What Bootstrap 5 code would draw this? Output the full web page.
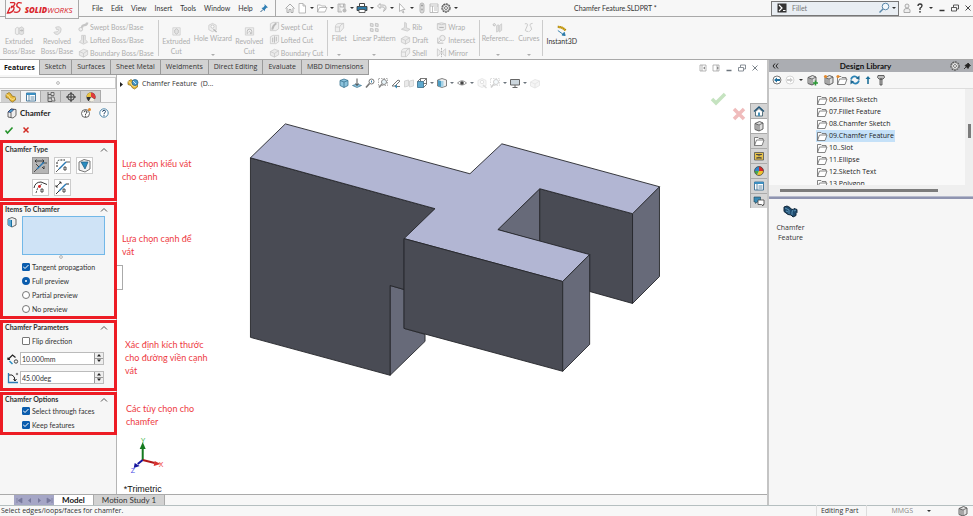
<!DOCTYPE html>
<html lang="en">
<head>
<meta charset="utf-8">
<meta name="viewport" content="width=device-width, initial-scale=1">
<title>Chamfer Feature.SLDPRT</title>
<link href="https://cdn.jsdelivr.net/npm/bootstrap@5.3.0/dist/css/bootstrap.min.css" rel="stylesheet">
<style>
:root{--line:#a9a9a9;--ink:#333;--dim:#adadad;--mark:#ed1c24}
body{font:7px/10px Lato,"Noto Sans",sans-serif;color:var(--ink);background:#f7f7f7}
button,.plain{font:inherit;color:inherit;background:none;border:0;padding:0;margin:0;text-decoration:none;white-space:nowrap}
button{display:inline-flex;align-items:center;justify-content:center}
svg{display:block;flex:none}
.ic{width:12px;height:12px}
.ic.faded{opacity:.4}
.caret{width:8px;flex:none;display:flex;justify-content:center}
.caret::after{content:"";border:2px solid transparent;border-top-color:currentColor;border-bottom:0}
.tabs,.tree,.crumb,.status,.item{font-family:"Open Sans","Noto Sans",sans-serif}
.titlebar{height:17px;border-bottom:1px solid var(--line)}
.brand-box{width:74px;height:19px;margin-left:5px;background:#f7f7f7;border:1px solid var(--line);border-top:0;z-index:2}
.menu{gap:8px;padding-left:13px}
.pin-box{padding:0 5px;border-right:1px solid var(--line)}
.search{width:128px;height:15px;border:1px solid #777;background:#e9eef3}
.search input{font-size:7px;color:#777;background:none;border:0;outline:0;min-width:0;padding:0 0 0 4px}
.wins{gap:1px;padding-left:2px;width:74px}
.ribbon{height:43px;color:var(--dim);border-bottom:1px solid var(--line)}
.big{flex-direction:column;width:38px;justify-content:flex-start;padding-top:8px}
.big.upper{padding-top:5px}
.big.upper .caret{margin-top:11px}
.w22{width:22px}.w27{width:27px}.w35{width:35px}.w48{width:48px}
.stack{padding:3px 0 0 2px;flex-direction:column;align-items:flex-start}
.stack button{height:13px;gap:1px}
.stack .ic,.big .ic{width:11px;height:11px;opacity:.8}
.rule{width:1px;background:#ccc;margin:3px 0}
.active-tool{color:#333;width:37px}
.active-tool .ic{opacity:1}
.tabs{height:15px}
.tabs button{background:#d2d2d2;border:1px solid #9a9a9a;border-top:0;border-left:0;padding:0 5px;height:15px}
.tabs .on{background:#fff;border:0;border-right:1px solid #9a9a9a;font-weight:700;color:#111;padding:0 4px}
.workspace{background:#fff}
.docwins{gap:1px;padding-right:6px}
.prop{width:117px;background:#f6f6f6;border-right:1px solid #b5b5b5}
.grip{height:12px;margin-top:2px;background:#fdfdfd;border:1px solid #ccc;border-left:0}
.ptabs{padding:1px 0 0 1px;border-bottom:1px solid #c4c4c4}
.ptabs button{width:20px;height:12px;background:#d0d0d0;border:1px solid #aaa;border-width:1px 1px 0 0}
.ptabs .on{background:#f6f6f6}
.ptitle{font-size:8px;font-weight:700;color:#222;height:20px;padding:0 6px;gap:2px}
.okbar{height:14px;padding-left:3px;gap:5px;margin-bottom:3px}
.grp{border:3px solid var(--mark);margin:0 0 1px;padding:0 4px 0 2px;width:117px}
.grp h2{font-size:7px;line-height:9px;height:9px;font-weight:700;margin:0 0 2px;color:#333}
.grp h2.roomy{margin:2px 0 1px}
.grp h2.tight{margin:0}
.types{padding:2px 0 2px 27px;gap:5px;width:98px}
.types button{width:17px;height:17px;border:1px solid #ccc;background:#fff}
.types .on{background:#b5b5b5;border-color:#999}
.types .ic{width:15px;height:15px}
.picker{padding-left:1px;gap:4px}
.pick{height:39px;resize:none;border:1px solid #72b8e8;background:#cfe3f6;outline:0;display:block;width:83px}
.opt{height:14px;padding-left:17px;gap:2px}
.opt input{appearance:none;width:8px;height:8px;margin:0;border:1px solid #777;border-radius:1px;background:#fff;flex:none}
.opt input:checked{border-color:#0a5cad;background:#0a5cad url("data:image/svg+xml,%3Csvg xmlns='http://www.w3.org/2000/svg' viewBox='0 0 8 8'%3E%3Cpath d='M1 3.500l2 2L6.500 2' fill='none' stroke='white'/%3E%3C/svg%3E") center/8px}
.opt input[type=radio]{border-radius:50%}
.opt input[type=radio]:checked{background:#fff;border:3px solid #0a5cad}
.prow{margin-top:4px;padding-left:2px;gap:1px}
.prow + .prow{margin-top:6px}
.spin{height:13px;border:1px solid #bbb;background:#fff;width:84px}
.spin input{border:0;outline:0;padding:0 0 0 1px;font-size:7px;color:#333;min-width:0;background:none}
.spin .ud{width:11px;border-left:1px solid #999}
.spin .ud button{height:50%;background:#eee;border-bottom:1px solid #999}
.spin .ud button:last-child{border:0}
.note{position:absolute;color:#ee3a43;font-size:9px;line-height:13px;margin:0}
.n1{left:5px;top:82px}.n2{left:5px;top:157px}.n3{left:8px;top:263px}.n4{left:9px;top:327px}
.scene{position:absolute;inset:0;width:100%;height:100%}
.crumb{left:2px;top:3px;position:absolute;gap:3px}
.hud{position:absolute;left:221px;top:2px;gap:1px}
.hud .caret{width:6px}
.handle{position:absolute;left:0;top:190px;width:6px;height:25px;background:#fff;border:1px solid #aaa;border-left:0}
.confirm{position:absolute;right:19px;top:16px}
.side{position:absolute;right:0;top:28px;width:17px}
.side button{height:15px;background:#d5d5d5;border:1px solid #aaa;border-right:0;border-bottom-width:0}
.side .on{background:#fff}
.btabs{height:11px;border-top:1px solid #aaa;background:#f7f7f7}
.btabs>button{font-size:8px;padding:0 8px;background:#d2d2d2;border-right:1px solid #aaa}
.btabs>.on{background:#fff;font-weight:700;color:#111}
.vcr{background:#a5a6c6;margin-left:14px;width:40px}
.lib{width:206px;border-left:2px solid #c4c4c4;background:#f6f6f6}
.lib header{height:12px;background:#abadb2;font-size:8px;font-weight:700;color:#111;padding:0 0 0 1px}
.ltools{height:17px;padding-left:2px;gap:1px;border-bottom:1px solid #ddd}
.tree{height:96px;padding-top:5px;background:#f9f9f9}
.tree ul{height:91px;overflow:hidden}
.tree li{height:12px;padding-left:47px}
.tree a{height:12px;gap:1px;padding-right:1px;color:#222}
.tree .on{background:#c5e1f8}
.vbar{width:8px;background:#efefef;padding:35px 2px 0 3px}
.vbar i,.hbar i{display:block;background:#7c7c7c}
.vbar i{height:14px}
.hbar{height:11px;background:#efefef;padding:4px 35px 0 11px}
.hbar i{height:3px}
.split{height:3px;background:#8f94b0;border-top:1px solid #b7bbcd}
.item{width:43px;margin-top:6px;color:#333;flex-direction:column;white-space:normal}
.status{height:11px;border-top:1px solid #b5bfc0;padding:0 0 0 1px;line-height:12px}
.status .cell{border-left:1px solid #ddd;padding:0 4px}
</style>
</head>
<body class="vh-100 d-flex flex-column overflow-hidden">
<svg width="0" height="0" class="position-absolute" aria-hidden="true">
<defs>
<symbol id="home" viewBox="0 0 12 12"><path d="M1.500 6.500L6 2l4.500 4.500M3 6v4.500h2V7.500h2v3h2V6" fill="none" stroke="#aaa"/></symbol>
<symbol id="new" viewBox="0 0 12 12"><path d="M3 1.500h4l2.500 2.500v7H3zM7 1.500V4h2.500" fill="#fff" stroke="#aaa" stroke-width=".8"/></symbol>
<symbol id="open" viewBox="0 0 12 12"><path d="M1.500 10V3h3l1 1h4v1.500M1.500 10l2-4.500h7.500l-2 4.500z" fill="#fff" stroke="#aaa" stroke-width=".8"/></symbol>
<symbol id="save" viewBox="0 0 12 12"><path d="M2 2h7v5M2 2v8h4M4 2v3h3.500V2" fill="#ddd" stroke="#aaa" stroke-width=".8"/><circle cx="8.500" cy="8.500" r="2" fill="#bbb"/></symbol>
<symbol id="print" viewBox="0 0 12 12"><path d="M3.500 4V1.500h5V4" fill="#fff" stroke="#444"/><path d="M1 4.500h10v4H1z" fill="#2e7ba6" stroke="#333" stroke-width=".8"/><path d="M3 7.500h6v3H3z" fill="#fff" stroke="#444" stroke-width=".8"/></symbol>
<symbol id="undo" viewBox="0 0 12 12"><path d="M4 1.500L1.500 4 4 6.500V5h3.500q2 .5 0 4.500 3.500-2 2.500-5Q9 3 7 3H4z" fill="#eee" stroke="#aaa" stroke-width=".8"/></symbol>
<symbol id="arrow" viewBox="0 0 12 12"><path d="M3.500 1.500v8l2-1.500 1.500 3 1-.5-1.500-3H9z" fill="#fff" stroke="#aaa" stroke-width=".8"/></symbol>
<symbol id="lights" viewBox="0 0 12 12"><rect x="4" y="1" width="4" height="10" rx="2" fill="#ddd" stroke="#aaa" stroke-width=".8"/><circle cx="6" cy="3.500" r="1" fill="#999"/><circle cx="6" cy="7.500" r="1" fill="#aaa"/></symbol>
<symbol id="list" viewBox="0 0 12 12"><path d="M2 2h8v8.500H2zM2 4h8M4.500 4v6.500M6 6h3M6 8h3" fill="#fff" stroke="#b0b0b0" stroke-width=".8"/></symbol>
<symbol id="gear" viewBox="0 0 12 12"><circle cx="6" cy="6" r="4" fill="#fff" stroke="#555" stroke-width="1.300" stroke-dasharray="2 .6"/><circle cx="6" cy="6" r="3.300" fill="#fff" stroke="#666" stroke-width=".7"/><circle cx="6" cy="6" r="1.500" fill="none" stroke="#555" stroke-width=".8"/></symbol>
<symbol id="pin" viewBox="0 0 12 12"><path d="M6.500 2l3.500 3.500-1.500.3-1.500 1.700-.3 1.800L3.500 6l1.700-.5 1.500-1.700z" fill="#2f7fb5"/><path d="M5 7.500L2.500 10" stroke="#2f5f85"/></symbol>
<symbol id="mag" viewBox="0 0 12 12"><circle cx="7.500" cy="4.500" r="3.300" fill="#f2f8fc" stroke="#5b88aa"/><path d="M5 7L1.500 10.500" stroke="#5b88aa" stroke-width="1.400"/></symbol>
<symbol id="user" viewBox="0 0 12 12"><circle cx="6" cy="4" r="2" fill="#eee" stroke="#999" stroke-width=".8"/><path d="M3 10.500V8q0-1.500 3-1.500T9 8v2.500z" fill="#eee" stroke="#999" stroke-width=".8"/></symbol>
<symbol id="qm" viewBox="0 0 12 12"><path d="M4 4q0-2 2-2t2 1.800Q8 5 6 6.200V8" fill="none" stroke="#333" stroke-width="1.300"/><circle cx="6" cy="9.800" r=".9" fill="#333"/></symbol>
<symbol id="min" viewBox="0 0 12 12"><path d="M3.500 8.500h5" stroke="currentColor" stroke-width="1.500"/></symbol>
<symbol id="restore" viewBox="0 0 12 12"><path d="M2.500 5.500h5v3.500h-5zM4.500 5V3h5v4H8" fill="none" stroke="currentColor" stroke-width=".8"/></symbol>
<symbol id="close" viewBox="0 0 12 12"><path d="M3.500 3.500l5 5m0-5l-5 5" stroke="currentColor" stroke-width=".9"/></symbol>
<symbol id="boxl" viewBox="0 0 12 12"><path d="M3 3h6v6H3zM5 3v6" fill="none" stroke="#999" stroke-width=".7"/><path d="M8 4.500v3L6 6z" fill="#888"/></symbol>
<symbol id="boxr" viewBox="0 0 12 12"><path d="M3 3h6v6H3zM7 3v6" fill="none" stroke="#999" stroke-width=".7"/><path d="M7 4.500v3L9 6z" fill="#888"/></symbol>
<symbol id="extr" viewBox="0 0 12 12"><path d="M1.500 4l2-1.500 2 1v6l-2 1-2-1z" fill="#eee" stroke="#bbb" stroke-width=".8"/><path d="M5.500 3.500l3-1.500 2 1.500v6l-2 1-3-1z" fill="#ddd" stroke="#bbb" stroke-width=".8"/><path d="M6.500 6h3m-1-1.200L9.500 6l-1 1.200" fill="none" stroke="#999" stroke-width=".7"/></symbol>
<symbol id="revo" viewBox="0 0 12 12"><path d="M4 2.500q5-2 6 2 .5 4-4 6-3 0-4-2.500l2-.5q2 .5 3-1.500T5 5z" fill="#e2e2e2" stroke="#bbb" stroke-width=".8"/></symbol>
<symbol id="sweep" viewBox="0 0 12 12"><circle cx="3" cy="9" r="2" fill="#eee" stroke="#bbb"/><path d="M4.500 7.500Q4 5 7 4.500t3-3" fill="none" stroke="#bbb" stroke-width="2.500"/></symbol>
<symbol id="loft" viewBox="0 0 12 12"><path d="M4 1.500h4V6l2.500 3L6 11 1.500 9 4 6z" fill="#e4e4e4" stroke="#bbb" stroke-width=".8"/><path d="M6 2v8" stroke="#bbb"/></symbol>
<symbol id="bound" viewBox="0 0 12 12"><path d="M1.500 5L6 2.500 10.500 4v4.500L6 11l-4.500-2z" fill="#e8e8e8" stroke="#bbb" stroke-width=".8"/><path d="M1.500 5L6 7l4.500-3M6 7v4" fill="none" stroke="#bbb" stroke-width=".8"/></symbol>
<symbol id="scut" viewBox="0 0 12 12"><path d="M1.500 3l3-1.500h6v7l-3 2h-6z" fill="#eee" stroke="#bbb" stroke-width=".8"/><path d="M3.500 9.500Q4 5 8 2.500" fill="none" stroke="#aaa" stroke-width="2"/></symbol>
<symbol id="lcut" viewBox="0 0 12 12"><path d="M1.500 3l3-1.500h6v7l-3 2h-6z" fill="#eee" stroke="#bbb" stroke-width=".8"/><path d="M4 4v5M8 3v5M6 2.500v7" fill="none" stroke="#aaa"/></symbol>
<symbol id="cut" viewBox="0 0 12 12"><path d="M2 3h8v8H2z" fill="#eee" stroke="#c0c0c0" stroke-width=".8"/><path d="M4 5.500L6 4l2 1.500v3L6 10 4 8.500z" fill="#ddd" stroke="#aaa" stroke-width=".8"/></symbol>
<symbol id="rcut" viewBox="0 0 12 12"><path d="M1.500 3h9v8h-9z" fill="#eee" stroke="#c0c0c0" stroke-width=".8"/><path d="M3.500 10V7q0-2.500 2.500-2.500T8.500 7v3M5 8l1-1 1 1v2" fill="none" stroke="#aaa"/></symbol>
<symbol id="hole" viewBox="0 0 12 12"><path d="M2 3.500L6 1.500l4 2v5l-4 2-4-2z" fill="#eee" stroke="#bbb" stroke-width=".8"/><circle cx="6" cy="5" r="1.700" fill="#fff" stroke="#aaa" stroke-width=".8"/><path d="M7 8l3.500 3" stroke="#aaa" stroke-width="1.500"/></symbol>
<symbol id="fil" viewBox="0 0 12 12"><path d="M1.500 5.500q0-4 5-4h4v5l-3.500 4H1.500z" fill="#eee" stroke="#bbb" stroke-width=".8"/><path d="M1.500 5.500H6q1-3 4.500-4M6 5.500v5" fill="none" stroke="#bbb" stroke-width=".8"/></symbol>
<symbol id="patt" viewBox="0 0 12 12"><path d="M1.500 1.500l3 .5v3l-3-.5zM7 1.500l3 .5v3L7 4.500zM1.500 7l3 .5v3l-3-.5zM7 7l3 .5v3l-3-.5z" fill="#ddd" stroke="#aaa" stroke-width=".8"/></symbol>
<symbol id="rib" viewBox="0 0 12 12"><path d="M5 1.500l2 1v5l4 1.500-3 2L1.500 9 5 7z" fill="#ddd" stroke="#bbb" stroke-width=".8"/></symbol>
<symbol id="wrap" viewBox="0 0 12 12"><path d="M1.500 3v6q4.500 3 9 0V3q-4.500-2-9 0 4.500 2 9 0" fill="#e8e8e8" stroke="#bbb" stroke-width=".9"/><path d="M3.500 7h5" stroke="#999"/></symbol>
<symbol id="inter" viewBox="0 0 12 12"><circle cx="7" cy="4.500" r="3" fill="#eee" stroke="#bbb"/><path d="M2 4v6h6" fill="none" stroke="#aaa"/><path d="M2 10l4-4" stroke="#bbb"/></symbol>
<symbol id="mirr" viewBox="0 0 12 12"><path d="M1.500 2v8l3-2.500v-3zM10.500 2v8l-3-2.500v-3z" fill="#eee" stroke="#bbb" stroke-width=".8"/><path d="M6 1v10" stroke="#999" stroke-dasharray="2 1"/></symbol>
<symbol id="refg" viewBox="0 0 12 12"><circle cx="2.500" cy="3" r="1.200" fill="none" stroke="#aaa"/><path d="M5 4l2-1v7l-2 1zM8 4l2.500-2v7L8 11z" fill="#ddd" stroke="#bbb" stroke-width=".8"/></symbol>
<symbol id="curv" viewBox="0 0 12 12"><path d="M2 2q4-1 2.500 2.500T2.500 9 6 10.500M10.500 1.500Q6 2 8.500 5T7 10.500" fill="none" stroke="#bbb"/></symbol>
<symbol id="inst" viewBox="0 0 12 12"><path d="M2 2q5 0 8.500 4" fill="none" stroke="#e6b417" stroke-width="2.500"/><path d="M2 2q5 0 8.500 4" fill="none" stroke="#444" stroke-width="2.500" stroke-dasharray=".6 1.500" opacity=".7"/><path d="M2 6l5.500 4M10 11.500L6.500 11 9 8z" stroke="#2878a8" fill="#2878a8"/></symbol>
<symbol id="part" viewBox="0 0 12 12"><path d="M1 3.500l3-2 2 1.500 1 2 3.500 1v3l-3 2L5 9.500l-1-2-3-1z" fill="#e8b93a" stroke="#8b6a14" stroke-width=".7"/><path d="M1 3.500L4 5l1 2.500 3 1 2.500-2" fill="none" stroke="#fbe7a2" stroke-width=".8"/></symbol>
<symbol id="partb" viewBox="0 0 12 12"><use href="#part"/><circle cx="8" cy="4.500" r="3" fill="#4a9ac9" stroke="#225a80" stroke-width=".7"/><path d="M6 3l3 3" stroke="#cfe8f6"/></symbol>
<symbol id="pm" viewBox="0 0 12 12"><path d="M1.500 2h9v8h-9z" fill="#fff" stroke="#3b6e93" stroke-width=".9"/><path d="M1.500 3h9" stroke="#3b8fc2" stroke-width="2"/><path d="M4 4v6M5.500 6h4M5.500 8h4" stroke="#3b6e93" stroke-width=".8"/></symbol>
<symbol id="conf" viewBox="0 0 12 12"><path d="M3 1v9.500h4M3 3.500h3M3 7h3" fill="none" stroke="#555" stroke-width=".9"/><path d="M6 1.500h3v3H6zM6 6h3l1 4H7z" fill="#ddd" stroke="#555" stroke-width=".8"/></symbol>
<symbol id="targ" viewBox="0 0 12 12"><circle cx="6" cy="6" r="3.300" fill="none" stroke="#333"/><path d="M6 1v10M1 6h10" stroke="#333"/></symbol>
<symbol id="ball" viewBox="0 0 12 12"><circle cx="6" cy="6" r="4.500" fill="#fff"/><path d="M6 6V1.500A4.500 4.500 0 0 1 10.500 6z" fill="#d62a2a"/><path d="M6 6h4.500A4.500 4.500 0 0 1 4 10z" fill="#efc12d"/><path d="M6 6L4 10A4.500 4.500 0 0 1 1.500 6z" fill="#49a64b"/><path d="M6 6H1.500A4.500 4.500 0 0 1 6 1.500z" fill="#3285c9"/><circle cx="6" cy="6" r="4.500" fill="none" stroke="#333" stroke-width=".7"/></symbol>
<symbol id="ball2" viewBox="0 0 12 12"><circle cx="6" cy="6" r="4.500" fill="#333"/><path d="M6 6V1.500A4.500 4.500 0 0 1 10 8z" fill="#e03a3a"/><path d="M6 6l4 2.500A4.500 4.500 0 0 1 4 10z" fill="#f3efe2"/><path d="M6 6H1.500A4.500 4.500 0 0 1 6 1.500z" fill="#e9c241"/></symbol>
<symbol id="cham" viewBox="0 0 12 12"><path d="M2 5l3-3 5 .5v6l-3 2.500-5-1z" fill="#eee" stroke="#444" stroke-width=".8"/><path d="M2 5l3-3 3 .5-3 3z" fill="#4e9fce" stroke="#225" stroke-width=".6"/><path d="M5 5.500v5" stroke="#444" stroke-width=".8"/></symbol>
<symbol id="help" viewBox="0 0 12 12"><circle cx="6" cy="6" r="4.200" fill="#fff" stroke="#3d7ca3" stroke-width=".9"/><path d="M4.600 4.800q0-1.500 1.500-1.500t1.400 1.300Q7.500 5.500 6 6.500v.8" fill="none" stroke="#246"/><circle cx="6" cy="8.700" r=".6" fill="#246"/></symbol>
<symbol id="help2" viewBox="0 0 12 12"><circle cx="5.500" cy="6.500" r="4" fill="#fff" stroke="#555" stroke-width=".9"/><path d="M4.100 5.300q0-1.500 1.500-1.500T7 5.100Q7 6 5.500 7v.8" fill="none" stroke="#333"/><circle cx="5.500" cy="9.200" r=".6" fill="#333"/><circle cx="9.500" cy="2.500" r="1.500" fill="#e58a2d"/></symbol>
<symbol id="ok" viewBox="0 0 12 12"><path d="M2.500 6.500l2 2.500L9.500 3.500" fill="none" stroke="#25932b" stroke-width="1.600"/></symbol>
<symbol id="no" viewBox="0 0 12 12"><path d="M3.500 3.500l5 5m0-5l-5 5" stroke="#d22c24" stroke-width="1.500"/></symbol>
<symbol id="up" viewBox="0 0 12 12"><path d="M3 7.500l3-3 3 3" fill="none" stroke="#444" stroke-width=".9"/></symbol>
<symbol id="ty1" viewBox="0 0 15 15"><path d="M1 14l3-3M10 5h4" fill="none" stroke="#333" stroke-width=".8"/><path d="M4 11l7-7" stroke="#2a7ab5" stroke-width="1.500"/><path d="M2 3h9M3.500 1.500L2 3l1.500 1.500M9.500 1.500L11 3 9.500 4.500M3 6l3 3M9 9l2 2V8" fill="none" stroke="#222" stroke-width=".8"/></symbol>
<symbol id="ty2" viewBox="0 0 15 15"><path d="M1 14l3-3M11 4h4" stroke="#333" stroke-width=".8"/><path d="M4 11l7-7" stroke="#2a7ab5" stroke-width="1.500"/><path d="M2 9V4q1-2 3-2h5" fill="none" stroke="#222" stroke-dasharray="2 1"/><path d="M9 9h2v3H9z" fill="none" stroke="#222" stroke-width=".8"/></symbol>
<symbol id="ty3" viewBox="0 0 15 15"><path d="M2 4l5-2.500L13 3v8l-5 3-6-2z" fill="#f2f2f2" stroke="#555" stroke-width=".8"/><path d="M4 4h7L8 11z" fill="#2a8cc0" stroke="#1b587c" stroke-width=".7"/></symbol>
<symbol id="ty4" viewBox="0 0 15 15"><path d="M1 8q1-6 7-6l6 2.500" fill="none" stroke="#333"/><path d="M3 13l2-6 4-3" fill="none" stroke="#222" stroke-width=".8" stroke-dasharray="2 1"/><circle cx="6.500" cy="6.500" r="1.400" fill="#d22"/><path d="M8 9h2v3H8z" fill="none" stroke="#222" stroke-width=".8"/></symbol>
<symbol id="ty5" viewBox="0 0 15 15"><path d="M1 14l3-3M11 4h3" fill="none" stroke="#333"/><path d="M4 11l7-7" stroke="#2a7ab5" stroke-width="1.500"/><path d="M1 7l5-5M1 5v2h2M4 2h2v2M8 9h2v3H8z" fill="none" stroke="#222" stroke-width=".8"/></symbol>
<symbol id="edge" viewBox="0 0 12 12"><path d="M2 3l4-1.500L10 3v6l-4 2-4-2z" fill="#eee" stroke="#444" stroke-width=".8"/><path d="M2 3l3 1v6.500L2 9z" fill="#59a9d4"/><path d="M5.500 4v7" stroke="#1b6f9f"/></symbol>
<symbol id="dist" viewBox="0 0 12 12"><path d="M1 6.500L5.500 2l3 2.500M1 4.500v2h2" fill="none" stroke="#222" stroke-width="1.200"/><path d="M2.500 8l3 3" stroke="#2a8cc0" stroke-width="1.500"/><circle cx="9" cy="8.500" r="1.700" fill="none" stroke="#333" stroke-width=".9"/></symbol>
<symbol id="angl" viewBox="0 0 12 12"><path d="M1.500 1v9.500H11" fill="none" stroke="#2a7ab5" stroke-width="1.300"/><path d="M2 3h3q3 1 3 6M6.500 7L8 9l1.500-2" fill="none" stroke="#222"/><circle cx="10" cy="2" r=".8" fill="none" stroke="#222" stroke-width=".6"/></symbol>
<symbol id="tri-u" viewBox="0 0 6 4"><path d="M3 1l2 2.500H1z" fill="#222"/></symbol>
<symbol id="tri-d" viewBox="0 0 6 4"><path d="M3 3L1 .5h4z" fill="#222"/></symbol>
<symbol id="vcube" viewBox="0 0 12 12"><path d="M2 3.500L6 2l4 1.500v5L6 10.500l-4-2z" fill="#8cc3dd" stroke="#3a7390" stroke-width=".8"/><path d="M2 3.500L6 5l4-1.500M6 5v5.500" fill="none" stroke="#3a7390" stroke-width=".8"/></symbol>
<symbol id="norm" viewBox="0 0 12 12"><path d="M1.500 8.500L6 7l4.500 1.500L6 10.500z" fill="#8cc3dd" stroke="#3a7390" stroke-width=".7"/><path d="M6 1.500v7M4.500 6.500L6 8.500l1.500-2" fill="none" stroke="#555"/></symbol>
<symbol id="zoom1" viewBox="0 0 12 12"><circle cx="7.500" cy="4.500" r="2.500" fill="#fff" stroke="#777"/><path d="M5.500 6.500L2 10.500" stroke="#777" stroke-width="1.700"/><path d="M7.500 3.500v2" stroke="#3a85b0"/></symbol>
<symbol id="zoom2" viewBox="0 0 12 12"><path d="M1.500 1.500h9v7h-9z" fill="none" stroke="#999" stroke-width=".8" stroke-dasharray="1.500 1"/><circle cx="7" cy="5" r="2.500" fill="#e9f5fa" stroke="#888"/><path d="M5 7l-3 3.500" stroke="#888" stroke-width="1.600"/></symbol>
<symbol id="prev" viewBox="0 0 12 12"><path d="M2 9l6-6 2 1-5 5zM6 9.500h4" fill="none" stroke="#777"/><path d="M7 7.500v4L4.500 9.500z" fill="#3a8ab5"/></symbol>
<symbol id="sect" viewBox="0 0 12 12"><path d="M1.500 4l4-1v6l-4 1zM6.500 4l4-1v6l-4 1z" fill="#ccc" stroke="#888" stroke-width=".8"/></symbol>
<symbol id="orient" viewBox="0 0 12 12"><path d="M1.500 4.500h6v6h-6z" fill="#5fa9ce" stroke="#346c8a" stroke-width=".8"/><path d="M1.500 4.500l3-3h6v6l-3 3M7.500 4.500l3-3M4.500 1.500V4M7.500 6.500h3" fill="none" stroke="#555" stroke-width=".8"/></symbol>
<symbol id="disp" viewBox="0 0 12 12"><path d="M1.500 3L6 1.500 10.500 3v6L6 10.500 1.500 9z" fill="#eee" stroke="#666" stroke-width=".8"/><path d="M2 3l3 1v6L2 9z" fill="#4c9dc4"/><path d="M5 4h2.500v5.500L5 10z" fill="#a6d2e6"/></symbol>
<symbol id="eye" viewBox="0 0 12 12"><path d="M1.500 6q4.500-4.500 9 0-4.500 4-9 0z" fill="#fff" stroke="#888" stroke-width=".9"/><circle cx="6" cy="6" r="1.800" fill="#444"/></symbol>
<symbol id="mon" viewBox="0 0 12 12"><path d="M1.500 2.500h9v5.500h-9z" fill="#ccd6dd" stroke="#666"/><path d="M6 8v2.500M3.500 10.500h5" stroke="#666"/></symbol>
<symbol id="lhome" viewBox="0 0 12 12"><path d="M1 6.500L6 2l5 4.500" fill="none" stroke="#225577" stroke-width="1.400"/><path d="M2.500 6.500L6 3.500l3.500 3v4.500h-7z" fill="#fff" stroke="#356" stroke-width=".8"/><path d="M5 7.500h2v3.500H5z" fill="#4a93ba"/></symbol>
<symbol id="books" viewBox="0 0 12 12"><path d="M2 3.500l4.500-2L10 3v6l-4 2-4-1.500z" fill="#ddd" stroke="#555" stroke-width=".9"/><path d="M2 3.500L6 5l4-2M6 5v6M4 4v6" fill="none" stroke="#555" stroke-width=".8"/></symbol>
<symbol id="bookadd" viewBox="0 0 12 12"><use href="#books"/><path d="M9.500 6.500v5M7 9h5" stroke="#2a9a35" stroke-width="1.500"/></symbol>
<symbol id="booknew" viewBox="0 0 12 12"><use href="#books"/><circle cx="2.500" cy="2.500" r="1.600" fill="#e58a2d"/></symbol>
<symbol id="fold" viewBox="0 0 12 12"><path d="M1.500 10.500V2.500h3.500l1 1h4V5M1.500 10.500l2-5.500h7.500l-2 5.500z" fill="#fff" stroke="#666" stroke-width=".8"/></symbol>
<symbol id="foldnew" viewBox="0 0 12 12"><use href="#fold"/><circle cx="2" cy="2.500" r="1.600" fill="#e58a2d"/></symbol>
<symbol id="pal" viewBox="0 0 12 12"><path d="M1.500 2.500h9v7.500h-9z" fill="#e5c14b" stroke="#555" stroke-width=".8"/><path d="M3 4.500h6M3 8h6M4 4.500q2 1.700 4 0M4 8q2-1.700 4 0" fill="none" stroke="#444" stroke-width=".9"/></symbol>
<symbol id="chat" viewBox="0 0 12 12"><path d="M1 2h6.500v5H4L2.500 8.500V7H1z" fill="#3b8bb5" stroke="#245" stroke-width=".6"/><path d="M5 5h6v4.500h-1v1.500L8.500 9.500H5z" fill="#fff" stroke="#444" stroke-width=".8"/></symbol>
<symbol id="back" viewBox="0 0 12 12"><circle cx="6" cy="6" r="4" fill="#fff" stroke="#555" stroke-width=".8"/><path d="M6 3.500v5L3 6zM6 5h3v2H6z" fill="#1d6d9c"/></symbol>
<symbol id="fwd" viewBox="0 0 12 12"><circle cx="6" cy="6" r="4" fill="#fff" stroke="#ccc" stroke-width=".8"/><path d="M6 3.500v5L9 6zM3 5h3v2H3z" fill="#ccc"/></symbol>
<symbol id="sync" viewBox="0 0 12 12"><path d="M2 5.500Q3 2 6.500 2.500L9 4M10 6.500Q9 10 5.500 9.500L3 8" fill="none" stroke="#2a82b5" stroke-width="1.700"/><path d="M10.500 1.500V6L7 4.500zM1.500 10.500V6L5 7.500z" fill="#1e658e"/></symbol>
<symbol id="uparr" viewBox="0 0 12 12"><path d="M6 3v7" stroke="#1e7099" stroke-width="1.600"/><path d="M6 2l2.500 3h-5z" fill="#1e7099"/></symbol>
<symbol id="bolt" viewBox="0 0 12 12"><path d="M3 1.500h6l.5 2L8 5H4L2.500 3.500zM5 5h2v6H5z" fill="#bbb" stroke="#444" stroke-width=".8"/></symbol>
<symbol id="pin2" viewBox="0 0 12 12"><path d="M7 3l2.500 2.500-1 .3L7 8.500 4 5.500 6.500 4zM5 7L3 9" fill="#222" stroke="#222" stroke-width=".8"/></symbol>
<symbol id="term" viewBox="0 0 12 12"><path d="M1.500 1.500h9v9h-9z" fill="#333"/><path d="M3 3l3 3-3 3M7 8.500h2.500" fill="none" stroke="#fff" stroke-width="1.200"/></symbol>
<symbol id="bits" viewBox="0 0 16 14"><path d="M1 2l3-1 3 1.500 1 1.500 2 .5 1-1 3 1v3l-1 1v2l-3 1.500-2-2-3-.5-4-3z" fill="#1f4b6e" stroke="#12283c"/><path d="M2 3l4 2v4M10 5l-1 2v3M11 6l2-1M3 6l2 1" fill="none" stroke="#5d93b5"/></symbol>
</defs>
</svg>

<header class="titlebar d-flex align-items-center">
  <div class="brand-box align-self-start position-relative">
    <svg viewBox="0 0 73 18" width="72" height="18" role="img" aria-label="SolidWorks"><path d="M4 2.500h4q2 1 0 3L5 8M5 6.500q4-.5 3 2.500-1 4-6.500 4L4 7.500M16 3q-4-1.500-5 1.500-.5 2 2 3t0 4q-2 1.500-5 .5" fill="none" stroke="#d9262c" stroke-width="1.400"/><text x="19" y="13" font-family="Open Sans,sans-serif" font-size="8" font-weight="800" font-style="italic" fill="#d9262c">SOLID<tspan font-weight="400">WORKS</tspan></text></svg>
  </div>
  <nav class="menu d-flex"><a class="plain" href="#">File</a><a class="plain" href="#">Edit</a><a class="plain" href="#">View</a><a class="plain" href="#">Insert</a><a class="plain" href="#">Tools</a><a class="plain" href="#">Window</a><a class="plain" href="#">Help</a></nav>
  <button class="pin-box h-100" aria-label="Pin menu"><svg class="ic"><use href="#pin"/></svg></button>
  <div class="d-flex align-items-center ps-2">
    <svg class="ic"><use href="#home"/></svg><svg class="ic"><use href="#new"/></svg><span class="caret"></span><svg class="ic"><use href="#open"/></svg><span class="caret"></span><svg class="ic"><use href="#save"/></svg><span class="caret"></span><svg class="ic"><use href="#print"/></svg><span class="caret"></span><svg class="ic"><use href="#undo"/></svg><span class="caret"></span><svg class="ic"><use href="#arrow"/></svg><span class="caret"></span><svg class="ic"><use href="#lights"/></svg><svg class="ic"><use href="#list"/></svg><svg class="ic"><use href="#gear"/></svg><span class="caret"></span>
  </div>
  <div class="flex-grow-1 text-center">Chamfer Feature.SLDPRT *</div>
  <label class="search d-flex align-items-center"><svg class="ic ms-1"><use href="#term"/></svg><input class="flex-grow-1" type="text" value="Fillet" aria-label="Search commands"><svg class="ic"><use href="#mag"/></svg><span class="caret"></span></label>
  <div class="wins d-flex align-items-center"><svg class="ic"><use href="#user"/></svg><svg class="ic"><use href="#qm"/></svg><span class="caret"></span><svg class="ic"><use href="#min"/></svg><svg class="ic"><use href="#restore"/></svg><svg class="ic"><use href="#close"/></svg></div>
</header>

<div class="ribbon d-flex">
  <button class="big"><svg class="ic"><use href="#extr"/></svg><span>Extruded<br>Boss/Base</span></button>
  <button class="big"><svg class="ic"><use href="#revo"/></svg><span>Revolved<br>Boss/Base</span></button>
  <div class="stack d-flex pe-1"><button><svg class="ic"><use href="#sweep"/></svg>Swept Boss/Base</button><button><svg class="ic"><use href="#loft"/></svg>Lofted Boss/Base</button><button><svg class="ic"><use href="#bound"/></svg>Boundary Boss/Base</button></div>
  <div class="rule"></div>
  <button class="big w35"><svg class="ic"><use href="#cut"/></svg><span>Extruded<br>Cut</span></button>
  <button class="big upper"><svg class="ic"><use href="#hole"/></svg><span>Hole Wizard</span><span class="caret"></span></button>
  <button class="big w35"><svg class="ic"><use href="#rcut"/></svg><span>Revolved<br>Cut</span></button>
  <div class="stack d-flex pe-1"><button><svg class="ic"><use href="#scut"/></svg>Swept Cut</button><button><svg class="ic"><use href="#lcut"/></svg>Lofted Cut</button><button><svg class="ic"><use href="#bound"/></svg>Boundary Cut</button></div>
  <div class="rule"></div>
  <button class="big upper w22"><svg class="ic"><use href="#fil"/></svg><span>Fillet</span><span class="caret"></span></button>
  <button class="big upper w48"><svg class="ic"><use href="#patt"/></svg><span>Linear Pattern</span><span class="caret"></span></button>
  <div class="stack d-flex"><button><svg class="ic"><use href="#rib"/></svg>Rib</button><button><svg class="ic"><use href="#bound"/></svg>Draft</button><button><svg class="ic"><use href="#fil"/></svg>Shell</button></div>
  <div class="stack d-flex ps-2 pe-1"><button><svg class="ic"><use href="#wrap"/></svg>Wrap</button><button><svg class="ic"><use href="#inter"/></svg>Intersect</button><button><svg class="ic"><use href="#mirr"/></svg>Mirror</button></div>
  <div class="rule"></div>
  <button class="big upper w35"><svg class="ic"><use href="#refg"/></svg><span>Referenc...</span><span class="caret"></span></button>
  <button class="big upper w27"><svg class="ic"><use href="#curv"/></svg><span>Curves</span><span class="caret"></span></button>
  <div class="rule"></div>
  <button class="big active-tool"><svg class="ic"><use href="#inst"/></svg><span>Instant3D</span></button>
</div>

<main class="d-flex flex-grow-1 overflow-hidden">
  <section class="workspace d-flex flex-column flex-grow-1">
    <div class="tabs d-flex">
      <button class="on">Features</button><button>Sketch</button><button>Surfaces</button><button>Sheet Metal</button><button>Weldments</button><button>Direct Editing</button><button>Evaluate</button><button>MBD Dimensions</button>
      <div class="docwins d-flex align-items-center ms-auto text-secondary"><svg class="ic"><use href="#boxl"/></svg><svg class="ic"><use href="#boxr"/></svg><svg class="ic"><use href="#min"/></svg><svg class="ic"><use href="#restore"/></svg><svg class="ic"><use href="#close"/></svg></div>
    </div>
    <div class="d-flex flex-grow-1 overflow-hidden">
      <aside class="prop flex-shrink-0">
        <div class="grip d-flex justify-content-center align-items-center"><svg width="4" height="4"><circle cx="2" cy="2" r="1.400" fill="none" stroke="#999" stroke-width=".7"/></svg></div>
        <div class="ptabs d-flex"><button aria-label="Tree"><svg class="ic"><use href="#part"/></svg></button><button class="on" aria-label="Properties"><svg class="ic"><use href="#pm"/></svg></button><button aria-label="Configurations"><svg class="ic"><use href="#conf"/></svg></button><button aria-label="Dimensions"><svg class="ic"><use href="#targ"/></svg></button><button aria-label="Display"><svg class="ic"><use href="#ball2"/></svg></button></div>
        <div class="ptitle d-flex align-items-center"><svg class="ic"><use href="#cham"/></svg>Chamfer<svg class="ic ms-auto"><use href="#help2"/></svg><svg class="ic ms-1"><use href="#help"/></svg></div>
        <div class="okbar d-flex align-items-center"><button aria-label="OK"><svg class="ic"><use href="#ok"/></svg></button><button aria-label="Cancel"><svg class="ic"><use href="#no"/></svg></button></div>
        <section class="grp">
          <h2 class="roomy d-flex align-items-center justify-content-between">Chamfer Type<svg class="ic"><use href="#up"/></svg></h2>
          <div class="types d-flex flex-wrap"><button class="on" aria-label="Angle distance"><svg class="ic"><use href="#ty1"/></svg></button><button aria-label="Distance distance"><svg class="ic"><use href="#ty2"/></svg></button><button aria-label="Vertex"><svg class="ic"><use href="#ty3"/></svg></button><button aria-label="Offset face"><svg class="ic"><use href="#ty4"/></svg></button><button aria-label="Face face"><svg class="ic"><use href="#ty5"/></svg></button></div>
        </section>
        <section class="grp">
          <h2 class="d-flex align-items-center justify-content-between">Items To Chamfer<svg class="ic"><use href="#up"/></svg></h2>
          <div class="picker d-flex"><svg class="ic"><use href="#edge"/></svg><textarea class="pick" aria-label="Items to chamfer" readonly></textarea></div>
          <div class="d-flex justify-content-center ps-2"><svg width="5" height="5"><circle cx="2" cy="2" r="1.400" fill="none" stroke="#999" stroke-width=".7"/></svg></div>
          <label class="opt d-flex align-items-center"><input type="checkbox" checked>Tangent propagation</label>
          <label class="opt d-flex align-items-center"><input type="radio" name="pv" checked>Full preview</label>
          <label class="opt d-flex align-items-center"><input type="radio" name="pv">Partial preview</label>
          <label class="opt d-flex align-items-center"><input type="radio" name="pv">No preview</label>
        </section>
        <section class="grp pb-1">
          <h2 class="d-flex align-items-center justify-content-between">Chamfer Parameters<svg class="ic"><use href="#up"/></svg></h2>
          <label class="opt d-flex align-items-center"><input type="checkbox">Flip direction</label>
          <div class="prow d-flex align-items-center"><svg class="ic"><use href="#dist"/></svg><div class="spin d-flex"><input class="flex-grow-1" type="text" value="10.000mm" aria-label="Distance"><div class="ud d-flex flex-column"><button aria-label="More"><svg width="6" height="4"><use href="#tri-u"/></svg></button><button aria-label="Less"><svg width="6" height="4"><use href="#tri-d"/></svg></button></div></div></div>
          <div class="prow d-flex align-items-center"><svg class="ic"><use href="#angl"/></svg><div class="spin d-flex"><input class="flex-grow-1" type="text" value="45.00deg" aria-label="Angle"><div class="ud d-flex flex-column"><button aria-label="More"><svg width="6" height="4"><use href="#tri-u"/></svg></button><button aria-label="Less"><svg width="6" height="4"><use href="#tri-d"/></svg></button></div></div></div>
        </section>
        <section class="grp">
          <h2 class="tight d-flex align-items-center justify-content-between">Chamfer Options<svg class="ic"><use href="#up"/></svg></h2>
          <label class="opt d-flex align-items-center"><input type="checkbox" checked>Select through faces</label>
          <label class="opt d-flex align-items-center"><input type="checkbox" checked>Keep features</label>
        </section>
      </aside>
      <div class="position-relative flex-grow-1">
        <svg class="scene" viewBox="117 75 650 420" role="img" aria-label="Model view">
          <g stroke="#25262b" stroke-width=".9" stroke-linejoin="round">
            <path fill="#676a79" d="M498 230L540 189V242z"/>
            <path fill="#494b54" d="M540 189L633 214V304L590 292V255L540 242z"/>
            <path fill="#676a79" d="M633 214L660 187V277L633 304zM390 286L404 290V329L425 335V342L390 376z"/>
            <path fill="#494b54" d="M250 158L435 209 404 239V290L390 286V376L250 338z"/>
            <path fill="#b2b6d3" d="M285 124L250 158 435 209 404 239 563 282 590 255 498 230 540 189 633 214 660 187 502 144 470 174z"/>
            <path fill="#494b54" d="M404 239L563 282V372L404 329z"/>
            <path fill="#676a79" d="M563 282L590 255V345L563 372z"/>
          </g>
          <path d="M142 461V448" stroke="#157a1f" stroke-width="2"/><path d="M142 443l3 7h-6z" fill="#157a1f"/>
          <path d="M142 461l12 3" stroke="#b01818" stroke-width="2"/><path d="M160 465l-7 2 1-5z" fill="#d8322f"/>
          <path d="M142 461l-5 4" stroke="#1616a0" stroke-width="2"/><path d="M133 469l1-5 5 3z" fill="#1616a0"/>
          <g font-family="Liberation Sans,sans-serif" font-size="7"><text x="140" y="444" fill="#47b84c">Y</text><text x="158" y="468" fill="#ee3b3b">X</text><text x="130" y="474" fill="#4949e6">Z</text><text x="123" y="493" font-size="9" fill="#111">*Trimetric</text></g>
        </svg>
        <div class="crumb d-flex align-items-center"><svg width="5" height="7"><path d="M1 1l3 2.500L1 6z" fill="#222"/></svg><svg class="ic"><use href="#partb"/></svg><span>Chamfer Feature&nbsp; (D...</span></div>
        <div class="hud d-flex align-items-center text-secondary"><svg class="ic"><use href="#vcube"/></svg><svg class="ic"><use href="#norm"/></svg><svg class="ic"><use href="#zoom1"/></svg><svg class="ic"><use href="#zoom2"/></svg><svg class="ic"><use href="#prev"/></svg><svg class="ic faded"><use href="#sect"/></svg><svg class="ic"><use href="#orient"/></svg><span class="caret"></span><svg class="ic"><use href="#disp"/></svg><span class="caret"></span><svg class="ic"><use href="#eye"/></svg><span class="caret"></span><svg class="ic faded"><use href="#hole"/></svg><svg class="ic faded"><use href="#zoom2"/></svg><span class="caret"></span><svg class="ic"><use href="#mon"/></svg><span class="caret"></span><svg class="ic faded"><use href="#bound"/></svg></div>
        <div class="handle"></div>
        <div class="confirm"><svg width="38" height="32" viewBox="0 0 38 32"><path d="M2 8l4 4 9-9" fill="none" stroke="#c5e3c0" stroke-width="3.500"/><path d="M24 18l10 10m0-10L24 28" stroke="#f0bcbc" stroke-width="3.500"/></svg></div>
        <div class="side d-flex flex-column"><button aria-label="Home"><svg class="ic"><use href="#lhome"/></svg></button><button class="on" aria-label="Design Library"><svg class="ic"><use href="#books"/></svg></button><button aria-label="Explorer"><svg class="ic"><use href="#fold"/></svg></button><button aria-label="Palette"><svg class="ic"><use href="#pal"/></svg></button><button aria-label="Appearances"><svg class="ic"><use href="#ball"/></svg></button><button aria-label="Properties"><svg class="ic"><use href="#pm"/></svg></button><button aria-label="Forum"><svg class="ic"><use href="#chat"/></svg></button></div>
        <p class="note n1">Lựa chọn kiểu vát<br>cho cạnh</p>
        <p class="note n2">Lựa chọn cạnh để<br>vát</p>
        <p class="note n3">Xác định kích thước<br>cho đường viền cạnh<br>vát</p>
        <p class="note n4">Các tùy chọn cho<br>chamfer</p>
      </div>
    </div>
    <div class="btabs d-flex"><div class="vcr d-flex align-items-center justify-content-around"><svg width="7" height="7"><path d="M1 1v5M6 1L2 3.500 6 6z" fill="#77789b" stroke="#77789b" stroke-width=".7"/></svg><svg width="7" height="7"><path d="M5 1L2 3.500 5 6z" fill="#77789b"/></svg><svg width="7" height="7"><path d="M2 1l3 2.500L2 6z" fill="#77789b"/></svg><svg width="7" height="7"><path d="M6 1v5M1 1l4 2.500L1 6z" fill="#77789b" stroke="#77789b" stroke-width=".7"/></svg></div><button class="on">Model</button><button>Motion Study 1</button></div>
  </section>

  <aside class="lib d-flex flex-column flex-shrink-0">
    <header class="d-flex align-items-center"><svg class="ic"><path d="M5 3.500L3 6l2 2.500M8 3.500L6 6l2 2.500" fill="none" stroke="#222"/></svg><span class="flex-grow-1 text-center">Design Library</span><svg class="ic"><use href="#gear"/></svg><svg class="ic"><use href="#pin2"/></svg></header>
    <div class="ltools d-flex align-items-center"><svg class="ic"><use href="#back"/></svg><svg class="ic"><use href="#fwd"/></svg><span class="caret"></span><svg class="ic"><use href="#bookadd"/></svg><svg class="ic ms-1"><use href="#booknew"/></svg><svg class="ic"><use href="#foldnew"/></svg><svg class="ic"><use href="#sync"/></svg><svg class="ic"><use href="#uparr"/></svg><svg class="ic"><use href="#bolt"/></svg></div>
    <div class="d-flex">
      <div class="tree flex-grow-1"><ul class="list-unstyled m-0">
        <li><a href="#" class="plain d-inline-flex align-items-center"><svg class="ic"><use href="#fold"/></svg>06.Fillet Sketch</a></li>
        <li><a href="#" class="plain d-inline-flex align-items-center"><svg class="ic"><use href="#fold"/></svg>07.Fillet Feature</a></li>
        <li><a href="#" class="plain d-inline-flex align-items-center"><svg class="ic"><use href="#fold"/></svg>08.Chamfer Sketch</a></li>
        <li><a href="#" class="plain d-inline-flex align-items-center on"><svg class="ic"><use href="#fold"/></svg>09.Chamfer Feature</a></li>
        <li><a href="#" class="plain d-inline-flex align-items-center"><svg class="ic"><use href="#fold"/></svg>10..Slot</a></li>
        <li><a href="#" class="plain d-inline-flex align-items-center"><svg class="ic"><use href="#fold"/></svg>11.Ellipse</a></li>
        <li><a href="#" class="plain d-inline-flex align-items-center"><svg class="ic"><use href="#fold"/></svg>12.Sketch Text</a></li>
        <li><a href="#" class="plain d-inline-flex align-items-center"><svg class="ic"><use href="#fold"/></svg>13.Polygon</a></li>
      </ul></div>
      <div class="vbar"><i></i></div>
    </div>
    <div class="hbar"><i></i></div>
    <div class="split"></div>
    <button class="item"><svg width="16" height="14"><use href="#bits"/></svg><span class="mt-1">Chamfer<br>Feature</span></button>
  </aside>
</main>

<footer class="status d-flex align-items-center">
  <span class="flex-grow-1">Select edges/loops/faces for chamfer.</span>
  <span class="cell">Editing Part</span><span class="cell ms-1 ps-4 text-black-50">MMGS</span><span class="caret mx-2"></span><svg class="ic ms-3 me-1"><use href="#books"/></svg>
</footer>
<script src="https://cdn.jsdelivr.net/npm/bootstrap@5.3.0/dist/js/bootstrap.bundle.min.js"></script>
</body>
</html>
